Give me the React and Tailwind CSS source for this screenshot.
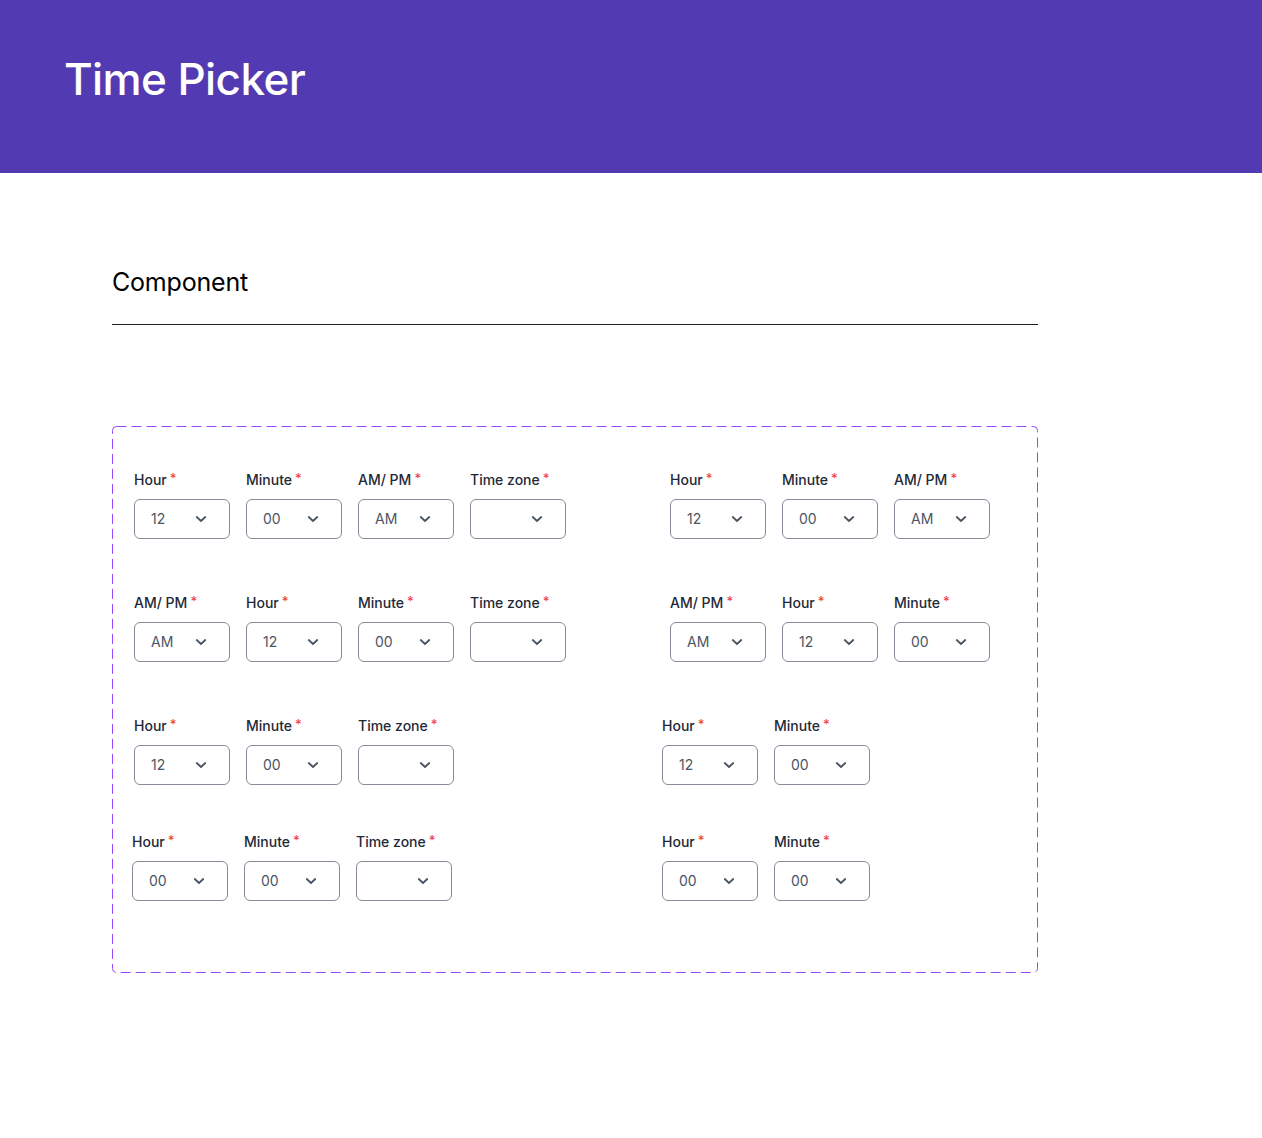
import React from 'react'

const Chevron = () => (
    <svg width="16" height="16" viewBox="0 0 16 16" fill="none" className="shrink-0">
        <path d="M3.75 6L8 10L12.25 6" stroke="#4b5563" strokeWidth="1.8" strokeLinecap="round" strokeLinejoin="round" />
    </svg>
)

const Field = ({ label, value }) => (
    <div className="flex flex-col w-24">
        <div className="flex items-start h-5 mt-px text-sm leading-5 text-[#1f2937] font-medium">
            <span>{label}</span>
            <span className="ml-[3px] text-[13px] leading-4 text-[#ef4444]">*</span>
        </div>
        <div className="mt-[9px] h-10 w-24 rounded-md border border-[#878b97] flex items-center justify-between pl-4 pr-5 text-sm text-[#4b5563]">
            <span>{value}</span>
            <Chevron />
        </div>
    </div>
)

const Group = ({ fields }) => (
    <div className="flex gap-4">
        {fields.map((f, i) => (
            <Field key={i} label={f[0]} value={f[1]} />
        ))}
    </div>
)

const Row = ({ left, right, leftMl, gap, className }) => (
    <div className={'flex ' + className}>
        <div className={leftMl}>
            <Group fields={left} />
        </div>
        <div className={gap}>
            <Group fields={right} />
        </div>
    </div>
)

export default function App() {
    return (
        <div className="min-h-[1138px] bg-white" style={{ fontFamily: 'Inter, "Noto Sans", sans-serif' }}>
            <header className="h-[173px] bg-[#523bb2] flex items-start pl-16 pt-[51px]">
                <h1 className="text-[44px] leading-[56px] text-white font-medium tracking-[-0.6px]">Time Picker</h1>
            </header>
            <main className="px-28 pt-[93px]">
                <h2 className="text-[25px] leading-8 text-black w-[926px] tracking-[-0.2px]">Component</h2>
                <div className="w-[926px] h-px bg-[#1f1f1f] mt-[26px]" />
                <div className="relative w-[926px] mt-[101px] h-[547px] pt-[43px]">
                    <svg className="absolute inset-0 pointer-events-none" width="926" height="547">
                        <rect x="0.5" y="0.5" width="925" height="546" rx="4" fill="none" stroke="#9747ff" strokeWidth="1" strokeDasharray="10 5" />
                    </svg>
                    <Row
                        className=""
                        leftMl="ml-[22px]"
                        gap="ml-[104px]"
                        left={[['Hour', '12'], ['Minute', '00'], ['AM/ PM', 'AM'], ['Time zone', '']]}
                        right={[['Hour', '12'], ['Minute', '00'], ['AM/ PM', 'AM']]}
                    />
                    <Row
                        className="mt-[53px]"
                        leftMl="ml-[22px]"
                        gap="ml-[104px]"
                        left={[['AM/ PM', 'AM'], ['Hour', '12'], ['Minute', '00'], ['Time zone', '']]}
                        right={[['AM/ PM', 'AM'], ['Hour', '12'], ['Minute', '00']]}
                    />
                    <Row
                        className="mt-[53px]"
                        leftMl="ml-[22px]"
                        gap="ml-[208px]"
                        left={[['Hour', '12'], ['Minute', '00'], ['Time zone', '']]}
                        right={[['Hour', '12'], ['Minute', '00']]}
                    />
                    <Row
                        className="mt-[46px]"
                        leftMl="ml-[20px]"
                        gap="ml-[210px]"
                        left={[['Hour', '00'], ['Minute', '00'], ['Time zone', '']]}
                        right={[['Hour', '00'], ['Minute', '00']]}
                    />
                </div>
            </main>
        </div>
    )
}
